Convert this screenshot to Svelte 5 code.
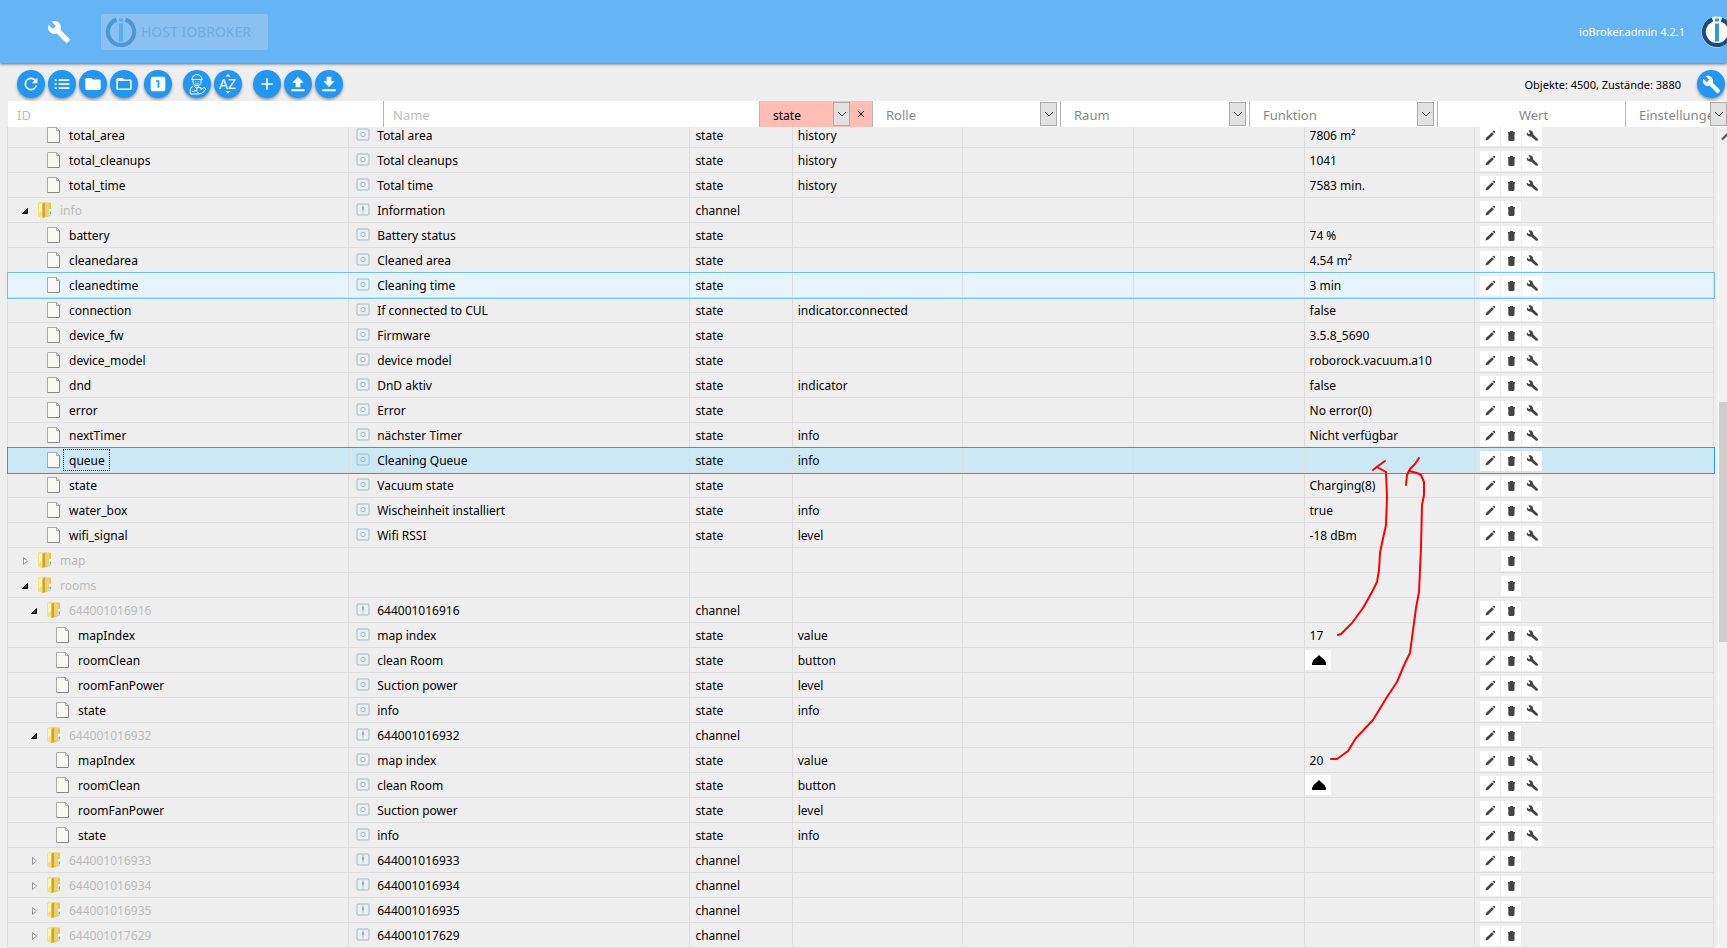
<script lang="ts">
    type Row = {
        level: number
        id: string
        name?: string
        type?: string
        role?: string
        value?: string
        folder?: string
        mark?: string
    }

    const toolbar = [
        [
            { icon: 'refresh', label: 'Aktualisieren' },
            { icon: 'list', label: 'Listenansicht' },
            { icon: 'folder', label: 'Alle zuklappen' },
            { icon: 'folderOpen', label: 'Alle aufklappen' }
        ],
        [{ icon: 'one', label: 'Eine Ebene' }],
        [
            { icon: 'expert', label: 'Expertenmodus' },
            { icon: 'sort', label: 'Sortieren' }
        ],
        [
            { icon: 'add', label: 'Neues Objekt' },
            { icon: 'upload', label: 'Importieren' },
            { icon: 'download', label: 'Exportieren' }
        ]
    ]

    const selects = ['Rolle', 'Raum', 'Funktion']

    const rows: Array<Row> = [
        { level: 2, id: 'total_area', name: 'Total area', type: 'state', role: 'history', value: '7806 m²' },
        { level: 2, id: 'total_cleanups', name: 'Total cleanups', type: 'state', role: 'history', value: '1041' },
        { level: 2, id: 'total_time', name: 'Total time', type: 'state', role: 'history', value: '7583 min.' },
        { level: 1, id: 'info', name: 'Information', type: 'channel', folder: 'open' },
        { level: 2, id: 'battery', name: 'Battery status', type: 'state', value: '74 %' },
        { level: 2, id: 'cleanedarea', name: 'Cleaned area', type: 'state', value: '4.54 m²' },
        { level: 2, id: 'cleanedtime', name: 'Cleaning time', type: 'state', value: '3 min', mark: 'hover' },
        { level: 2, id: 'connection', name: 'If connected to CUL', type: 'state', role: 'indicator.connected', value: 'false' },
        { level: 2, id: 'device_fw', name: 'Firmware', type: 'state', value: '3.5.8_5690' },
        { level: 2, id: 'device_model', name: 'device model', type: 'state', value: 'roborock.vacuum.a10' },
        { level: 2, id: 'dnd', name: 'DnD aktiv', type: 'state', role: 'indicator', value: 'false' },
        { level: 2, id: 'error', name: 'Error', type: 'state', value: 'No error(0)' },
        { level: 2, id: 'nextTimer', name: 'nächster Timer', type: 'state', role: 'info', value: 'Nicht verfügbar' },
        { level: 2, id: 'queue', name: 'Cleaning Queue', type: 'state', role: 'info', mark: 'active' },
        { level: 2, id: 'state', name: 'Vacuum state', type: 'state', value: 'Charging(8)' },
        { level: 2, id: 'water_box', name: 'Wischeinheit installiert', type: 'state', role: 'info', value: 'true' },
        { level: 2, id: 'wifi_signal', name: 'Wifi RSSI', type: 'state', role: 'level', value: '-18 dBm' },
        { level: 1, id: 'map', folder: 'closed' },
        { level: 1, id: 'rooms', folder: 'open' },
        ...room('644001016916', '17'),
        ...room('644001016932', '20'),
        { level: 2, id: '644001016933', name: '644001016933', type: 'channel', folder: 'closed' },
        { level: 2, id: '644001016934', name: '644001016934', type: 'channel', folder: 'closed' },
        { level: 2, id: '644001016935', name: '644001016935', type: 'channel', folder: 'closed' },
        { level: 2, id: '644001017629', name: '644001017629', type: 'channel', folder: 'closed' }
    ]

    function room(id: string, index: string): Array<Row> {
        return [
            { level: 2, id, name: id, type: 'channel', folder: 'open' },
            { level: 3, id: 'mapIndex', name: 'map index', type: 'state', role: 'value', value: index },
            { level: 3, id: 'roomClean', name: 'clean Room', type: 'state', role: 'button' },
            { level: 3, id: 'roomFanPower', name: 'Suction power', type: 'state', role: 'level' },
            { level: 3, id: 'state', name: 'info', type: 'state', role: 'info' }
        ]
    }
</script>

{#snippet wrench()}
    <svg class="wrench" viewBox="0 0 24 24" aria-hidden="true">
        <path d="M22.7 19l-9.100-9.100c.9-2.300.4-5-1.500-6.900-2-2-5-2.400-7.400-1.300L9 6 6 9 1.600 4.700C.4 7.100.9 10.100 2.900 12.100c1.900 1.900 4.600 2.400 6.900 1.500l9.100 9.100c.4.4 1 .4 1.400 0l2.300-2.300c.5-.4.5-1.100.1-1.400z" />
    </svg>
{/snippet}

{#snippet logo(ring: string, bar: string, fill: string)}
    <svg class="logo" viewBox="0 0 32 32" aria-hidden="true">
        <circle cx="16" cy="16" r="15.500" {fill} />
        <path d="M11.500 3.500A13.200 13.200 0 1 0 20.500 3.500" fill="none" stroke={ring} stroke-width="4" />
        <path d="M14 7.500h4v18h-4zM14 2.500h4v3h-4z" fill={bar} />
    </svg>
{/snippet}

{#snippet arrow()}
    <span class="arrow">
        <svg viewBox="0 0 10 10" aria-hidden="true"><path d="M1 3l4 4 4-4" /></svg>
    </span>
{/snippet}

{#snippet toolIcon(name: string)}
    <svg viewBox={name === 'refresh' ? '2 2 20 20' : '0 0 24 24'} aria-hidden="true">
        {#if name === 'refresh'}
            <path d="M17.650 6.350A8 8 0 1 0 19.730 14h-2.080A6 6 0 1 1 12 6c1.660 0 3.140.690 4.220 1.780L13 11h7V4z" />
        {:else if name === 'list'}
            <path d="M1 5h3v2.500H1zM1 11h3v2.500H1zM1 17h3v2.500H1zM7 5h16v2.500H7zM7 11h16v2.500H7zM7 17h16v2.500H7z" />
        {:else if name === 'folder'}
            <path d="M9.500 3H2.500C1.200 3 .5 4 .5 5.200v13.600c0 1.200.9 2.200 2 2.200h19c1.100 0 2-1 2-2.200V7.500c0-1.200-.9-2.200-2-2.200H12z" />
        {:else if name === 'folderOpen'}
            <path d="M21.500 5.300H12L9.500 3H2.500C1.200 3 .5 4 .5 5.200v13.600c0 1.200.9 2.200 2 2.200h19c1.100 0 2-1 2-2.200V7.500c0-1.200-.9-2.200-2-2.200zm-.3 13.300H2.800V7.600h18.400z" />
        {:else if name === 'one'}
            <path d="M20 1H4C2.300 1 1 2.300 1 4v16c0 1.700 1.300 3 3 3h16c1.700 0 3-1.300 3-3V4c0-1.700-1.300-3-3-3zm-6 16.500h-2.600V8.500H9V6.200h5z" />
        {:else if name === 'add'}
            <path d="M20.500 13.200h-7.300v7.300h-2.400v-7.300H3.500v-2.400h7.300V3.500h2.400v7.300h7.300z" />
        {:else if name === 'upload'}
            <path d="M8.500 17h7v-7H20.500L12 1 3.500 10h5zM2 20h20v3H2z" />
        {:else if name === 'download'}
            <path d="M20.500 8h-5V1h-7v7h-5L12 16.500zM2 20h20v3H2z" />
        {/if}
    </svg>
{/snippet}

<div class="page">
    <header class="header">
        {@render wrench()}
        <button class="host" disabled>
            {@render logo('#4d97d6', '#55aee9', 'none')}
            <span>HOST IOBROKER</span>
        </button>
        <span class="version">ioBroker.admin 4.2.1</span>
        {@render logo('#1b4a80', '#3399cc', '#fff')}
    </header>

    <div class="toolbar">
        {#each toolbar as group, i}
            <div class="toolbar__group" class:toolbar__group--near={i === 1}>
                {#each group as tool}
                    <button class="round" aria-label={tool.label}>
                        {#if tool.icon === 'sort'}
                            <svg class="wide" viewBox="0 0 28 28" aria-hidden="true">
                                <text x="5" y="19">A</text>
                                <text x="14" y="19">Z</text>
                                <path d="M11.500 6.500l2.500-2.500 2.500 2.500zM11.500 21l2.500 2.500 2.500-2.500z" />
                            </svg>
                        {:else if tool.icon === 'expert'}
                            <svg class="wide line" viewBox="0 0 28 28" aria-hidden="true">
                                <path d="M9 9.500c0-6.500 10-6.500 10 0M8.500 9.500h11M10 10v2c0 5 8 5 8 0v-2M12.500 11.500v.8M15.500 11.500v.8M12.500 14h3M10 16.500c-3 .5-3 4-2.500 7.500h9M11 16l2.500 2 2.500-1.500M9 21.500l5-1v-3h4v2l3-2 2 1.500-4 4.500h-3l-2-2" />
                            </svg>
                        {:else}
                            {@render toolIcon(tool.icon)}
                        {/if}
                    </button>
                {/each}
            </div>
        {/each}
        <span class="count">Objekte: 4500, Zustände: 3880</span>
        <button class="round" aria-label="Einstellungen">{@render wrench()}</button>
    </div>

    <form class="filters">
        <div class="filter"><input type="text" placeholder="ID" aria-label="ID" /></div>
        <div class="filter"><input type="text" placeholder="Name" aria-label="Name" /></div>
        <div class="filter filter--set">
            <select aria-label="Typ"><option>state</option></select>
            {@render arrow()}
            <button type="button" class="clear" aria-label="Filter löschen">
                <svg viewBox="0 0 10 10" aria-hidden="true"><path d="M2 2l6 6M8 2l-6 6" /></svg>
            </button>
        </div>
        {#each selects as label}
            <div class="filter">
                <select aria-label={label}><option>{label}</option></select>
                {@render arrow()}
            </div>
        {/each}
        <div class="filter filter--title">Wert</div>
        <div class="filter filter--last">
            <select aria-label="Einstellungen"><option>Einstellungen</option></select>
            {@render arrow()}
        </div>
    </form>

    <main class="body">
        <table class="tree">
            <colgroup>
                <col class="w20" /><col class="w20" /><col class="w6" />
                <col class="w10" /><col class="w10" /><col class="w10" /><col class="w10" />
                <col />
            </colgroup>
            <tbody>
                {#each rows as row}
                    <tr class={row.mark}>
                        <td>
                            <div class="node" style="padding-left: {row.level * 9 + 1}px">
                                <svg class="expander" viewBox="0 0 16 16" aria-hidden="true">
                                    {#if row.folder === 'open'}
                                        <path d="M9.500 5.500v5h-5z" fill="#333" stroke="#000" />
                                    {:else if row.folder === 'closed'}
                                        <path d="M5.500 4.500v7l4-3.500z" fill="#fff" stroke="#999" />
                                    {/if}
                                </svg>
                                <svg class="icon" viewBox="0 0 16 16" aria-hidden="true">
                                    {#if row.folder}
                                        <path d="M1 1.500L3 .5h10.500L14 2v11.500l-7 2.500-6-2z" fill="#e6c955" />
                                        <path d="M1 1.500L3 .5h3v15L1 14z" fill="#f5e277" />
                                        <path d="M2 2l3-.5v7L2 11z" fill="#fdf5b4" />
                                        <path d="M5.500 2l2.500-1.500v14l-2.500 1.500z" fill="#c9a430" />
                                        <path d="M8.500 1h3.500v13H8.500z" fill="#ecd46c" />
                                        <path d="M12 7h2v6h-2z" fill="#fff" />
                                        <path d="M12.500 9.500h1.500v3h-1.500z" fill="#52b4d8" />
                                    {:else}
                                        <path d="M1.500.5h9l3 3v12h-12z" fill="#f8f9f3" />
                                        <path d="M1.500 15.500V.5h9" fill="none" stroke="#aaa" />
                                        <path d="M10.500.5l3 3v12h-12" fill="none" stroke="#888" />
                                        <path d="M10.500.5v3h3" fill="#ddd" stroke="#aaa" />
                                    {/if}
                                </svg>
                                <span class="title" class:title--folder={row.folder} class:title--focus={row.mark === 'active'}>{row.id}</span>
                            </div>
                        </td>
                        <td>
                            {#if row.name}
                                <div class="name">
                                    <svg viewBox="0 0 14 14" aria-hidden="true">
                                        <rect x="1" y="1" width="12" height="11" rx="1" />
                                        {#if row.folder}
                                            <path d="M7 2v2M7 8v1.500M7 10.500v1" />
                                            <path class="dark" d="M7 4v3.500" />
                                        {:else}
                                            <circle cx="7" cy="6.500" r="2.200" />
                                        {/if}
                                    </svg>
                                    <span>{row.name}</span>
                                </div>
                            {/if}
                        </td>
                        <td>{row.type ?? ''}</td>
                        <td>{row.role ?? ''}</td>
                        <td></td>
                        <td></td>
                        <td class:press={row.role === 'button'}>
                            {#if row.role === 'button'}
                                <button class="bell" aria-label="Auslösen">
                                    <svg viewBox="0 0 14 10" aria-hidden="true"><path d="M0 10V8l1.500-3L5 2l2-2 2 2 3.500 3L14 8v2z" /></svg>
                                </button>
                            {:else}
                                {row.value ?? ''}
                            {/if}
                        </td>
                        <td>
                            <div class="actions">
                                {#if row.type}
                                    <button class="edit" aria-label="Bearbeiten">
                                        <svg viewBox="0 0 20 20" aria-hidden="true"><path d="M5.500 14.500l.7-2.700 5.800-5.600 1.900 1.900-5.700 5.700zM12.500 5.600l.8-.8 1.700.3-.1 1.600-.6.6z" /></svg>
                                    </button>
                                {/if}
                                <button class="delete" aria-label="Löschen">
                                    <svg viewBox="0 0 20 20" aria-hidden="true"><path d="M7 6h2V5h3v1h2v1.500H7zM7.300 7.500h6.200V14l-1 1H8.300l-1-1z" /></svg>
                                </button>
                                {#if row.type === 'state'}
                                    <button aria-label="Einstellungen">
                                        <svg viewBox="0 0 20 20" aria-hidden="true">
                                            <path d="M5 6.500L7 8.300 8.200 7.200 6.500 4.500c2.300-.8 4.800.7 4.800 4.100l4.400 4.200c1 1.400-.8 2.800-2 1.600L9.100 10.600C6.500 11 4 9 5 6.500z" />
                                        </svg>
                                    </button>
                                {/if}
                            </div>
                        </td>
                    </tr>
                {/each}
            </tbody>
        </table>
        <div class="scrollbar">
            <svg viewBox="0 0 16 16" aria-hidden="true"><path d="M3 12l5-5 5 5" /></svg>
            <div class="scrollbar__thumb"></div>
        </div>
    </main>

    <!-- hand drawn arrows from the map indexes up to the queue value -->
    <svg class="notes" viewBox="0 0 1727 948" aria-hidden="true">
        <path d="M1338 635L1341 634 1352 623 1363 608 1372 592 1377 582 1379 570 1380 553 1382 543 1386 525 1387 497 1386 472 1377 467" />
        <path d="M1373 470L1378 466 1385 461" />
        <path d="M1331 759L1337 759 1348 751 1356 738 1373 720 1387 697 1397 682 1405 663 1410 653 1414 623 1416 608 1419 592 1421 547 1422 505 1424 495 1424 482 1421 475 1417 473 1409 471" />
        <path d="M1406 485L1407 475 1410 469 1415 464 1419 458" />
    </svg>
</div>

<style>
    :global(body) {
        margin: 0;
        background: #eee;
    }

    .page {
        position: relative;
        height: 100vh;
        display: flex;
        flex-direction: column;
        overflow: hidden;
        font-family: "Noto Sans", "Open Sans", sans-serif;
        font-size: 12px;
        color: #000;
    }

    button, input, select {
        font: inherit;
        border: 0;
        padding: 0;
        margin: 0;
    }

    svg {
        display: block;
        flex: none;
    }

    .header {
        height: 63px;
        flex: none;
        display: flex;
        align-items: center;
        padding-left: 47px;
        background: #64b5f6;
        box-shadow: 0 1px 3px rgba(0, 0, 0, 0.6);
        z-index: 1;
    }

    .wrench {
        width: 24px;
        height: 24px;
        fill: #fff;
    }

    .logo {
        width: 32px;
        height: 32px;
        margin-right: -6px;
    }

    .host {
        display: flex;
        align-items: center;
        gap: 4px;
        height: 36px;
        margin-left: 30px;
        padding: 0 17px 0 4px;
        border-radius: 2px;
        background: #8ac1f1;
        color: #70ade0;
        font-size: 14px;
    }

    .host .logo {
        margin: 0;
    }

    .version {
        margin-left: auto;
        margin-right: 16px;
        color: #fff;
        font-size: 11px;
    }

    .toolbar {
        height: 38px;
        flex: none;
        display: flex;
        align-items: center;
        gap: 11px;
        padding: 4px 2px 0 17px;
        box-sizing: border-box;
    }

    .toolbar__group {
        display: flex;
        gap: 3px;
    }

    .toolbar__group--near {
        margin-left: -5px;
    }

    .round {
        width: 28px;
        height: 28px;
        display: flex;
        align-items: center;
        justify-content: center;
        border-radius: 50%;
        background: #2196f3;
        box-shadow: 0 2px 3px rgba(0, 0, 0, 0.35);
    }

    .round svg {
        width: 16px;
        height: 16px;
        fill: #fff;
    }

    .round .wide {
        width: 28px;
        height: 28px;
        font-size: 14px;
    }

    .round .line {
        fill: none;
        stroke: #fff;
    }

    .round .wrench {
        width: 19px;
        height: 19px;
    }

    .count {
        margin-left: auto;
        margin-right: 5px;
        font-size: 11px;
    }

    .filters {
        height: 26px;
        flex: none;
        display: grid;
        grid-template-columns: 376fr 376fr 113fr 188fr 189fr 188fr 188fr 101fr;
        margin-left: 8px;
        background: #fff;
        font-size: 13px;
        color: #888;
    }

    .filter {
        display: flex;
        align-items: center;
        min-width: 0;
        padding-right: 3px;
        border-right: 1px solid #b5b5b5;
    }

    .filter input {
        width: 100%;
        height: 26px;
        padding: 2px 9px 0;
        box-sizing: border-box;
        background: none;
    }

    .filter input::placeholder {
        color: #bdbdbd;
    }

    .filter select {
        flex: 1;
        min-width: 0;
        height: 26px;
        padding: 2px 0 0 13px;
        appearance: none;
        background: none;
        color: inherit;
        border-radius: 0;
    }

    .filter--set {
        padding: 0;
        background: #ffbdb5;
        color: #000;
        font-size: 12px;
    }

    .filter--title {
        justify-content: center;
        padding: 2px 0 0 4px;
    }

    .filter--last {
        padding: 0;
        border: 0;
    }

    .arrow {
        width: 17px;
        height: 24px;
        flex: none;
        display: flex;
        align-items: center;
        justify-content: center;
        box-sizing: border-box;
        border: 1px solid #aaa;
        background: #e1e1e1;
    }

    .arrow svg, .clear svg {
        width: 10px;
        height: 10px;
        fill: none;
        stroke: #444;
    }

    .clear {
        width: 22px;
        height: 24px;
        display: flex;
        align-items: center;
        justify-content: center;
        background: none;
    }

    .clear svg {
        stroke: #000;
    }

    .body {
        flex: 1;
        min-height: 0;
        display: flex;
        align-items: flex-start;
        padding-left: 7px;
        overflow: hidden;
    }

    /* scrolled a few pixels into the first row */
    .tree {
        flex: 1;
        margin-top: -4px;
        margin-right: 4px;
        width: 100%;
        table-layout: fixed;
        border-spacing: 0;
        border-left: 1px solid #ddd;
    }

    .w20 { width: 20%; }
    .w6 { width: 6%; }
    .w10 { width: 10%; }

    td {
        height: 25px;
        box-sizing: border-box;
        padding: 3px 0 0 5px;
        border-right: 1px solid #ddd;
        border-bottom: 1px solid #ddd;
        line-height: 20px;
        white-space: nowrap;
        vertical-align: top;
    }

    td:first-child {
        padding: 1px 0 0;
    }

    .hover {
        background: #e5f3fb;
        outline: 1px solid #70c0e7;
    }

    .active {
        background: #cbe8f6;
        outline: 1px solid #26a0da;
    }

    .node {
        display: flex;
        align-items: flex-start;
    }

    .expander {
        width: 16px;
        height: 16px;
        margin: 4px 3px 0 0;
    }

    .icon {
        width: 16px;
        height: 16px;
        margin: 3px 1px 0 0;
    }

    .title {
        padding: 2px 4px 0 5px;
        border: 1px solid transparent;
        line-height: 18px;
    }

    .title--folder {
        color: #bbb;
    }

    .title--focus {
        border: 1px dotted #333;
    }

    .name {
        display: flex;
        align-items: flex-start;
        gap: 7px;
        padding-left: 2px;
    }

    .name svg {
        width: 14px;
        height: 14px;
        margin-top: 2px;
        fill: none;
        stroke: #9dbcc8;
    }

    .name .dark {
        stroke: #3c7488;
    }

    td.press {
        padding: 2px 0 0;
    }

    .bell {
        width: 26px;
        height: 20px;
        display: flex;
        align-items: center;
        justify-content: center;
        padding-left: 2px;
        background: #fff;
    }

    .bell svg {
        width: 14px;
        height: 10px;
    }

    .actions {
        display: grid;
        grid-template-columns: repeat(3, 20px);
        gap: 1px;
    }

    .actions button {
        width: 20px;
        height: 20px;
        background: #fff;
    }

    .actions .delete {
        grid-column: 2;
    }

    .actions svg {
        width: 20px;
        height: 20px;
        fill: #444;
    }

    .scrollbar {
        width: 8px;
        align-self: stretch;
        flex: none;
        display: flex;
        flex-direction: column;
        overflow: hidden;
        border-left: 1px solid #fff;
        background: #f0f0f0;
    }

    .scrollbar svg {
        width: 16px;
        height: 17px;
        fill: none;
        stroke: #505050;
        stroke-width: 2;
    }

    .scrollbar__thumb {
        height: 240px;
        margin-top: 258px;
        background: #cdcdcd;
    }

    .notes {
        position: absolute;
        top: 0;
        left: 0;
        width: 100%;
        z-index: 2;
        pointer-events: none;
        fill: none;
        stroke: #f00;
        stroke-width: 2;
        stroke-linejoin: round;
        stroke-linecap: round;
    }
</style>
